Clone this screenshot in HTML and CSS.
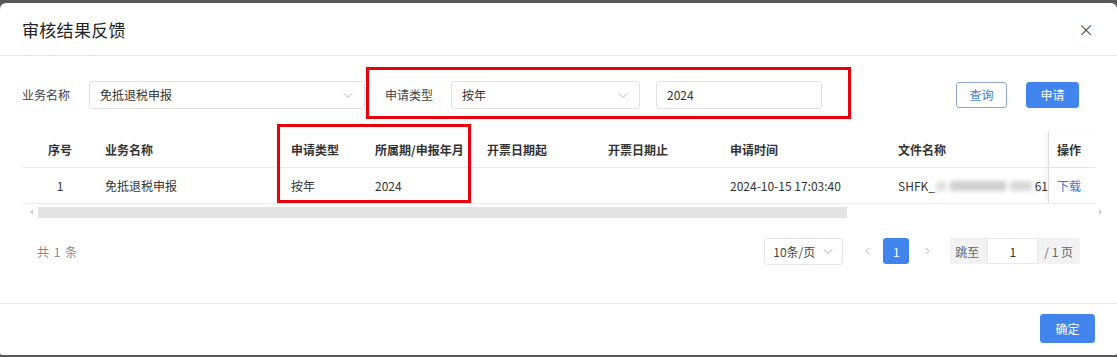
FILE: index.html
```html
<!DOCTYPE html>
<html lang="zh">
<head>
<meta charset="utf-8">
<link rel="stylesheet" href="styles.css">
</head>
<body>
<div class="modal">
  <div class="modal-header">
    <span class="title">审核结果反馈</span>
    <span class="close">×</span>
  </div>
  <div class="modal-body">
    <div class="filters">
      <span class="label">业务名称</span>
      <div class="select sel-biz"><span>免抵退税申报</span><svg class="chev" viewBox="0 0 12 12"><path d="M2 4.5 L6 8.5 L10 4.5" fill="none" stroke="#b8b8b8" stroke-width="1"/></svg></div>
      <span class="label label2">申请类型</span>
      <div class="select sel-type"><span>按年</span><svg class="chev" viewBox="0 0 12 12"><path d="M2 4.5 L6 8.5 L10 4.5" fill="none" stroke="#b8b8b8" stroke-width="1"/></svg></div>
      <div class="input sel-year">2024</div>
      <div class="spacer"></div>
      <button class="btn btn-outline">查询</button>
      <button class="btn btn-primary">申请</button>
      <div class="redbox rb1"></div>
    </div>

    <div class="table">
      <div class="trow thead">
        <div class="c c1 center">序号</div>
        <div class="c c2">业务名称</div>
        <div class="c c3">申请类型</div>
        <div class="c c4">所属期/申报年月</div>
        <div class="c c5">开票日期起</div>
        <div class="c c6">开票日期止</div>
        <div class="c c7">申请时间</div>
        <div class="c c8">文件名称</div>
        <div class="c c9 fixed">操作</div>
      </div>
      <div class="trow tbody">
        <div class="c c1 center">1</div>
        <div class="c c2">免抵退税申报</div>
        <div class="c c3">按年</div>
        <div class="c c4">2024</div>
        <div class="c c5"></div>
        <div class="c c6"></div>
        <div class="c c7">2024-10-15 17:03:40</div>
        <div class="c c8">SHFK_<span class="blur"><i class="b1"></i><i class="b2"></i><i class="b3"></i></span>61</div>
        <div class="c c9 fixed"><span class="link">下载</span></div>
      </div>
      <div class="scrollbar">
        <span class="arrow left"></span>
        <div class="thumb"></div>
        <span class="arrow right"></span>
      </div>
      <div class="redbox rb2"></div>
    </div>

    <div class="pager">
      <span class="total">共 1 条</span>
      <div class="spacer"></div>
      <div class="select page-size"><span>10条/页</span><svg class="chev" viewBox="0 0 12 12"><path d="M2 4.5 L6 8.5 L10 4.5" fill="none" stroke="#a8a8a8" stroke-width="1"/></svg></div>
      <svg class="nav prev" viewBox="0 0 10 10"><path d="M6 2 L3 5 L6 8" fill="none" stroke="#c0c0c0" stroke-width="1"/></svg>
      <span class="page-num">1</span>
      <svg class="nav next" viewBox="0 0 10 10"><path d="M4 2 L7 5 L4 8" fill="none" stroke="#c0c0c0" stroke-width="1"/></svg>
      <div class="jump">
        <span>跳至</span>
        <div class="jump-input">1</div>
        <span>/ 1 页</span>
      </div>
    </div>
  </div>
  <div class="modal-footer">
    <button class="btn btn-primary btn-ok">确定</button>
  </div>
</div>
</body>
</html>
```

FILE: styles.css
```css
* { box-sizing: border-box; }
html, body { margin: 0; padding: 0; }
body {
  background: #595959;
  width: 1117px;
  height: 357px;
  overflow: hidden;
  font-family: "Noto Sans CJK SC", "Liberation Sans", sans-serif;
  font-size: 12px;
  color: #333;
  padding-top: 3px;
}
.modal {
  background: #fff;
  height: 352px;
  border-radius: 6px 6px 2px 2px;
  display: flex;
  flex-direction: column;
}
.modal-header {
  height: 53px;
  border-bottom: 1px solid #e6e6e6;
  display: flex;
  align-items: center;
  padding: 0 23px 0 22px;
  justify-content: space-between;
}
.title {
  font-size: 17px;
  color: #222;
  letter-spacing: 0.3px;
}
.close {
  font-size: 16px;
  color: #555;
  line-height: 1;
}
.modal-body {
  height: 248px;
  border-bottom: 1px solid #e6e6e6;
  padding: 0 21px 0 23px;
  position: relative;
}
.filters {
  display: flex;
  align-items: center;
  height: 76px;
  padding-top: 1px;
  position: relative;
  margin-left: -1px;
}
.label { color: #444; margin-right: 19px; }
.label2 { margin-left: 20px; margin-right: 18px; }
.select, .input {
  height: 28px;
  border: 1px solid #e2e2e2;
  border-radius: 3px;
  display: flex;
  align-items: center;
  padding: 0 10px;
  color: #333;
  justify-content: space-between;
}
.chev { width: 12px; height: 12px; }
.sel-biz { width: 276px; }
.sel-type { width: 189px; }
.sel-year { width: 166px; margin-left: 16px; }
.spacer { flex: 1; }
.btn {
  font-family: inherit;
  font-size: 12px;
  height: 26px;
  border-radius: 3px;
  padding: 0;
  cursor: pointer;
}
.btn-outline {
  width: 51px;
  background: #fff;
  border: 1px solid #8fa7c6;
  color: #3d7ce0;
  margin-right: 19px;
}
.btn-primary {
  width: 53px;
  background: #4184ee;
  border: 1px solid #4184ee;
  color: #fff;
  margin-right: 17px;
}
.redbox {
  position: absolute;
  border: 3px solid #e8000b;
  pointer-events: none;
}
.rb1 { left: 344px; top: 11px; width: 485px; height: 52px; }

.table { position: relative; margin-top: 0; }
.trow {
  display: grid;
  grid-template-columns: 74px 186px 84px 112px 121px 122px 168px 158px 48px;
  width: 1073px;
  border-bottom: 1px solid #ececec;
}
.thead { height: 36px; font-weight: bold; color: #333; }
.tbody { height: 36px; color: #333; }
.c {
  display: flex;
  align-items: center;
  padding-left: 8px;
  white-space: nowrap;
  overflow: hidden;
}
.center { justify-content: center; padding-left: 0; }
.fixed {
  border-left: 1px solid #dcdcdc;
  box-shadow: -3px 0 4px rgba(0,0,0,0.04);
}
.blur {
  display: inline-flex;
  align-items: center;
  gap: 4px;
  width: 100px;
  height: 14px;
  filter: blur(2px);
  margin: 0 1px 0 1px;
}
.blur i { display: block; height: 10px; background: #cfcfcf; }
.b1 { width: 10px; background: #e2e2e2 !important; }
.b2 { width: 56px; }
.b3 { width: 22px; background: #d8d8d8 !important; }
.link { color: #3a78d6; }
.scrollbar {
  height: 13px;
  display: flex;
  align-items: center;
  margin-top: 2px;
  width: 1094px;
  position: relative;
}
.thumb {
  position: absolute;
  left: 15px;
  width: 809px;
  top: 1px;
  height: 11px;
  background: #e3e3e3;
}
.arrow { position: absolute; top: 3px; width: 0; height: 0; border-top: 3px solid transparent; border-bottom: 3px solid transparent; }
.arrow.left { left: 7px; border-right: 3px solid #cfcfcf; }
.arrow.right { left: 1076px; border-left: 3px solid #cfcfcf; }
.rb2 { left: 254px; top: -8px; width: 194px; height: 79px; }

.pager {
  display: flex;
  align-items: center;
  height: 30px;
  margin-top: 17px;
}
.total { color: #888; margin-left: 14px; letter-spacing: 1px; }
.page-size {
  width: 79px;
  height: 27px;
  padding: 0 8px 0 8px;
  font-size: 12px;
  color: #444;
  border-color: #e4e4e4;
}
.nav { width: 10px; height: 10px; margin-left: 20px; }
.nav.next { margin-left: 13px; }
.page-num {
  width: 26px;
  height: 26px;
  margin-left: 10px;
  background: #4184ee;
  color: #fff;
  border-radius: 3px;
  display: flex;
  align-items: center;
  justify-content: center;
}
.jump {
  margin-left: 18px;
  margin-right: 16px;
  height: 26px;
  background: #f2f2f2;
  display: flex;
  align-items: center;
  color: #666;
  padding: 0 7px 0 5px;
  border-radius: 2px;
}
.jump-input {
  width: 51px;
  height: 26px;
  background: #fff;
  border: 1px solid #e8e8e8;
  margin: 0 6px 0 8px;
  display: flex;
  align-items: center;
  justify-content: center;
  color: #333;
}
.modal-footer {
  flex: 1;
  display: flex;
  justify-content: flex-end;
  align-items: center;
  padding-right: 22px;
  padding-bottom: 2px;
}
.btn-ok { width: 55px; height: 29px; margin-right: 0; }
```
